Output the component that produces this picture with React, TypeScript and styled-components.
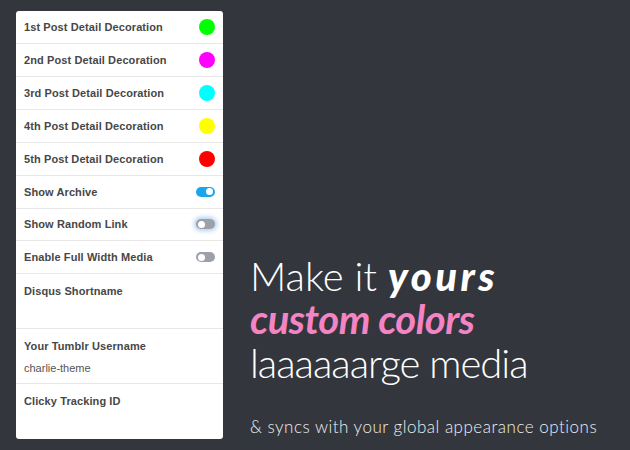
import React from "react";
import styled, { createGlobalStyle } from "styled-components";

const Global = createGlobalStyle`
  html, body { margin: 0; padding: 0; }
  body {
    background: #33363d;
    width: 630px;
    height: 450px;
    overflow: hidden;
  }
`;

const Page = styled.div`
  display: flex;
  width: 630px;
  height: 450px;
  box-sizing: border-box;
  padding: 11px 0 0 16px;
`;

const Panel = styled.div`
  width: 207px;
  height: 428px;
  background: #fff;
  border-radius: 3px;
  overflow: hidden;
  display: flex;
  flex-direction: column;
  font-family: "Liberation Sans", Arial, sans-serif;
`;

const Row = styled.div<{ $tall?: boolean }>`
  box-sizing: border-box;
  height: ${(p) => (p.$tall ? "55px" : "33px")};
  border-bottom: 1px solid #e8e8e8;
  padding: ${(p) => (p.$tall ? "10px 8px 0 8px" : "0 7px 0 8px")};
  display: flex;
  flex-direction: ${(p) => (p.$tall ? "column" : "row")};
  align-items: ${(p) => (p.$tall ? "flex-start" : "center")};
  justify-content: ${(p) => (p.$tall ? "flex-start" : "space-between")};
  &:last-child { border-bottom: none; }
`;

const Label = styled.span`
  font-size: 11px;
  font-weight: bold;
  color: #474747;
  line-height: 14px;
  letter-spacing: 0.1px;
`;

const Value = styled.span`
  font-size: 11px;
  color: #555;
  margin-top: 8px;
  line-height: 14px;
`;

const Swatch = styled.span<{ $c: string }>`
  width: 16px;
  height: 16px;
  border-radius: 50%;
  background: ${(p) => p.$c};
  margin-right: 1px;
`;

const Toggle = styled.span<{ $on?: boolean; $focus?: boolean }>`
  position: relative;
  width: 19px;
  height: 10px;
  border-radius: 5px;
  background: ${(p) => (p.$on ? "#19a6ec" : "#9ca1a9")};
  box-shadow: ${(p) => (p.$focus ? "0 0 4px 2px rgba(120,170,230,0.55)" : "none")};
  margin-right: 1px;
  &::after {
    content: "";
    position: absolute;
    top: 1.5px;
    ${(p) => (p.$on ? "right: 2px;" : "left: 2px;")}
    width: 7px;
    height: 7px;
    border-radius: 50%;
    background: #fff;
  }
`;

const Side = styled.div`
  flex: 1;
  display: flex;
  flex-direction: column;
  justify-content: flex-end;
  padding: 0 0 12px 27px;
  font-family: Lato, "Open Sans", sans-serif;
  color: #fff;
`;

const Headline = styled.div<{ $tight?: boolean }>`
  font-size: 40px;
  line-height: 43.5px;
  font-weight: 300;
  letter-spacing: ${(p) => (p.$tight ? "-1px" : "0")};
  white-space: nowrap;
`;

const Strong = styled.span<{ $pink?: boolean }>`
  font-weight: ${(p) => (p.$pink ? 700 : 900)};
  font-style: italic;
  letter-spacing: ${(p) => (p.$pink ? "-0.5px" : "3.5px")};
  color: ${(p) => (p.$pink ? "#f484c4" : "#fff")};
`;

const Note = styled.div`
  margin-top: 31px;
  font-size: 17px;
  font-weight: 300;
  line-height: 22px;
  letter-spacing: 0.5px;
  color: #eee;
  white-space: nowrap;
`;

const colors: [string, string][] = [
  ["1st Post Detail Decoration", "#00ff00"],
  ["2nd Post Detail Decoration", "#ff00ff"],
  ["3rd Post Detail Decoration", "#00ffff"],
  ["4th Post Detail Decoration", "#ffff00"],
  ["5th Post Detail Decoration", "#ff0000"],
];

export default function App() {
  return (
    <>
      <Global />
      <Page>
        <Panel>
          {colors.map(([l, c]) => (
            <Row key={l}>
              <Label>{l}</Label>
              <Swatch $c={c} />
            </Row>
          ))}
          <Row>
            <Label>Show Archive</Label>
            <Toggle $on />
          </Row>
          <Row>
            <Label>Show Random Link</Label>
            <Toggle $focus />
          </Row>
          <Row>
            <Label>Enable Full Width Media</Label>
            <Toggle />
          </Row>
          <Row $tall>
            <Label>Disqus Shortname</Label>
          </Row>
          <Row $tall>
            <Label>Your Tumblr Username</Label>
            <Value>charlie-theme</Value>
          </Row>
          <Row $tall>
            <Label>Clicky Tracking ID</Label>
          </Row>
        </Panel>
        <Side>
          <Headline>
            Make it <Strong>yours</Strong>
          </Headline>
          <Headline>
            <Strong $pink>custom colors</Strong>
          </Headline>
          <Headline $tight>laaaaaarge media</Headline>
          <Note>&amp; syncs with your global appearance options</Note>
        </Side>
      </Page>
    </>
  );
}
